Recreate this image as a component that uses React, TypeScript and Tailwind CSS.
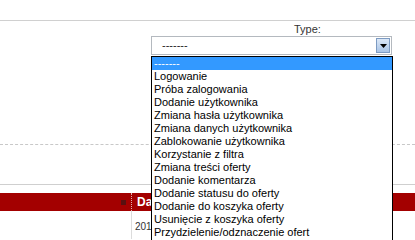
const options = [
  '-------',
  'Logowanie',
  'Próba zalogowania',
  'Dodanie użytkownika',
  'Zmiana hasła użytkownika',
  'Zmiana danych użytkownika',
  'Zablokowanie użytkownika',
  'Korzystanie z filtra',
  'Zmiana treści oferty',
  'Dodanie komentarza',
  'Dodanie statusu do oferty',
  'Dodanie do koszyka oferty',
  'Usunięcie z koszyka oferty',
  'Przydzielenie/odznaczenie ofert',
];

export default function App() {
  return (
    <div className="relative w-[415px] h-[240px] overflow-hidden bg-white font-['Liberation_Sans',Arial,sans-serif] text-[11px]">
      {/* top rule */}
      <div className="h-[21px] border-b border-[#d0d0d0]" />

      {/* filter */}
      <div className="pl-[151px] pt-[2px]">
        <div className="pl-[143px] h-[13px] leading-[13px] text-[#333]">Type:</div>
        <div className="w-[241px] h-[19px] border border-[#b4b9bf] bg-white flex items-center">
          <span className="pl-[10px] text-[#222] leading-none">-------</span>
          <div className="ml-auto mr-[1px] w-[14px] h-[15px] border border-[#7d9bc2] bg-gradient-to-b from-[#dce8f7] to-[#a9c4e6] flex items-center justify-center">
            <svg width="7" height="4" viewBox="0 0 7 4">
              <path d="M0 0h7L3.5 4z" fill="#000" />
            </svg>
          </div>
        </div>
      </div>

      {/* dashed separator */}
      <div className="mt-[89px] border-t border-dashed border-[#c8c8c8]" />

      {/* solid separator */}
      <div className="mt-[39px] border-t border-[#cfcfcf]" />

      {/* table header */}
      <div className="mt-[8px] h-[18px] bg-[#a30000] flex">
        <div className="w-[131px] flex items-center justify-end pr-[5px]">
          <span className="w-[5px] h-[5px] bg-[#5a1010]" />
        </div>
        <div className="border-l border-dotted border-[#e0b0b0] pl-[5px] flex items-center text-white font-bold text-[12px]">
          Data
        </div>
      </div>
      <div className="flex h-[28px]">
        <div className="w-[131px]" />
        <div className="border-l border-[#dcdcdc] pl-[3px] pt-[8px] text-[10px] text-[#333]">2012-05-14</div>
      </div>

      {/* open dropdown list */}
      <div className="absolute left-[151px] top-[56px] w-[242px] border border-black bg-white pb-[20px]">
        {options.map((o, i) => (
          <div
            key={o}
            className={
              i === 0
                ? 'h-[13px] leading-[13px] pl-[2px] bg-[#3399ff] text-white'
                : 'h-[13px] leading-[13px] pl-[2px] text-black'
            }
          >
            {o}
          </div>
        ))}
      </div>
    </div>
  );
}
